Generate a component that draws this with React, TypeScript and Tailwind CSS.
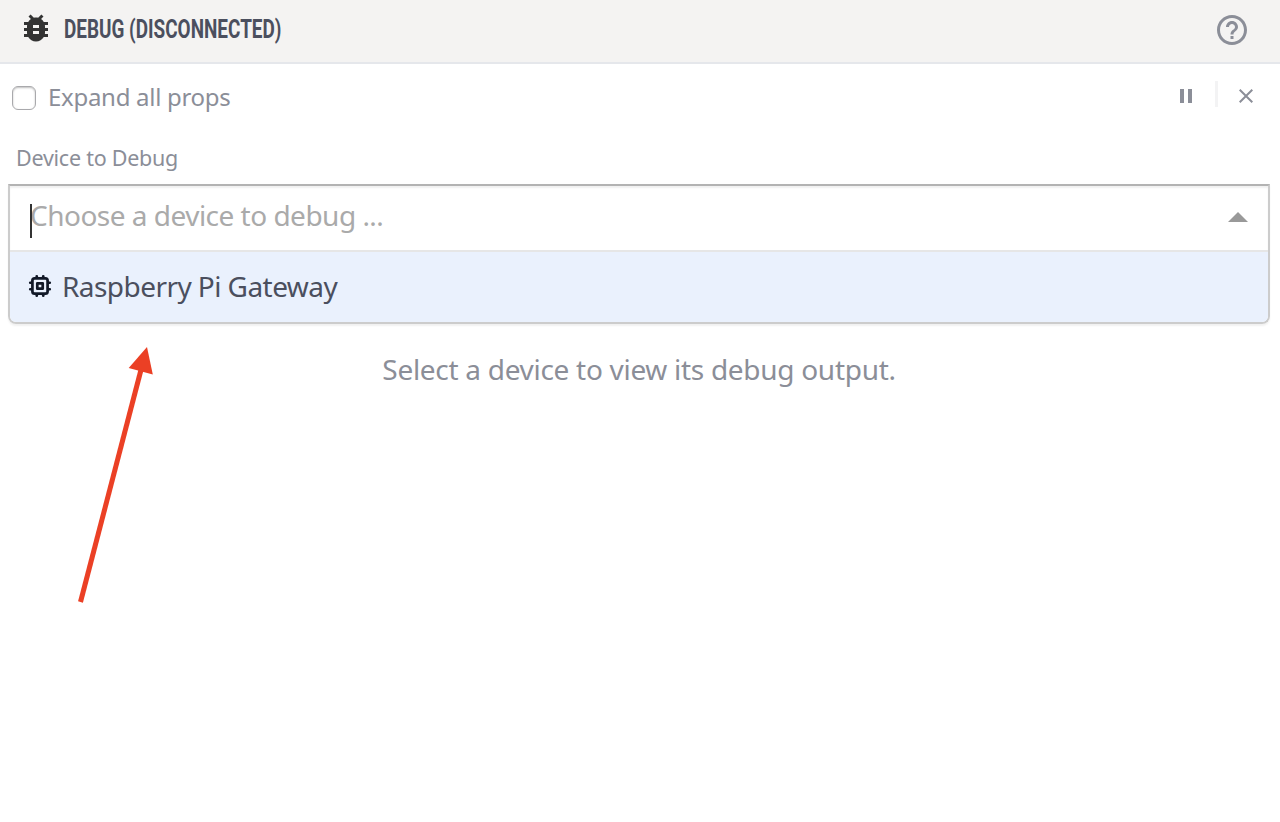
import { MdBugReport, MdHelpOutline } from "react-icons/md";

function ChipIcon() {
  return (
    <svg className="-mt-[2px] size-[26px] shrink-0 text-[#111827]" viewBox="0 0 24 24" fill="none" stroke="currentColor" strokeWidth="2.5" strokeLinecap="round" strokeLinejoin="round">
      <path d="M9 3v2m6-2v2M9 19v2m6-2v2M5 9H3m2 6H3m18-6h-2m2 6h-2M7 19h10a2 2 0 002-2V7a2 2 0 00-2-2H7a2 2 0 00-2 2v10a2 2 0 002 2zM9.5 9.5h5v5h-5z" />
    </svg>
  );
}

function Header() {
  return (
    <header className="flex h-16 items-start border-b-2 border-[#e5e7eb] bg-[#f4f3f2] pl-[18px] pr-[30px]">
      <MdBugReport className="mt-[10px] size-9 shrink-0 text-[#333333]" />
      <h1 className="ml-[10px] mt-[11px] w-[219px] origin-left scale-x-[0.728] whitespace-nowrap font-['Roboto',sans-serif] text-[26px] font-bold leading-9 text-[#4b4f5e]">
        DEBUG (DISCONNECTED)
      </h1>
      <button className="ml-auto mt-3" aria-label="Help">
        <MdHelpOutline className="size-9 text-[#8b8e98]" />
      </button>
    </header>
  );
}

function Toolbar() {
  return (
    <div className="flex h-[69px] items-start pl-3 pr-[27px]">
      <label className="mt-[16px] flex h-9 items-center">
        <span className="size-6 rounded-[6px] border border-[#a9a9ac] bg-white shadow-[inset_0_1px_2px_rgba(0,0,0,0.25)]" />
        <span className="-mt-[2px] ml-3 whitespace-nowrap text-[24px] leading-9 tracking-[-0.29px]">Expand all props</span>
      </label>
      <div className="ml-auto mt-[17px] flex h-[26px] items-center">
        <button className="mt-1 flex gap-1" aria-label="Pause">
          <span className="h-[14px] w-1 bg-[#8b8e98]" />
          <span className="h-[14px] w-1 bg-[#8b8e98]" />
        </button>
        <span className="ml-[23px] h-[26px] w-[3px] bg-[#f3f3f4]" />
        <button className="ml-[21px] mt-1" aria-label="Close">
          <svg className="size-[14px]" viewBox="0 0 14 14" fill="none" stroke="#8b8e98" strokeWidth="2">
            <path d="M.7.7l12.6 12.6M13.3.7L.7 13.3" />
          </svg>
        </button>
      </div>
    </div>
  );
}

function DeviceSelect() {
  return (
    <section>
      <h2 className="ml-4 h-[51px] pt-[8px] text-[21.5px] leading-[34px] tracking-[-0.25px]">Device to Debug</h2>
      <div className="ml-2 mr-[10px] rounded-b-lg border-2 border-[#cccccc] border-t-[#b3b3b3] shadow-[0_2px_2px_rgba(0,0,0,0.06)]">
        <div className="flex h-16 items-center pl-5 pr-5 shadow-[inset_0_2px_2px_rgba(0,0,0,0.06)]">
          <span className="relative -mt-[6px] whitespace-nowrap text-[28px] leading-10 tracking-[-0.51px] text-[#aaaaaa]">
            Choose a device to debug ...
            <span className="absolute left-0 top-[9px] h-[34px] w-[2px] bg-[#333333]" />
          </span>
          <svg className="-mt-[2px] ml-auto h-[10px] w-5" viewBox="0 0 20 10">
            <path d="M0 10L10 0l10 10z" fill="#999999" />
          </svg>
        </div>
        <div className="flex h-[72px] items-center rounded-b-[6px] border-t-2 border-[#e6e6e6] bg-[#eaf1fd] pl-[17px] text-[#4b4f5e]">
          <ChipIcon />
          <span className="-mt-[3px] ml-[9px] whitespace-nowrap text-[28px] leading-10 tracking-[-0.56px]">Raspberry Pi Gateway</span>
        </div>
      </div>
    </section>
  );
}

export default function App() {
  return (
    <main className="relative h-[822px] w-full overflow-hidden bg-white font-['Noto_Sans',sans-serif] font-[450] text-[#8b8e98]">
      <Header />
      <Toolbar />
      <DeviceSelect />
      <p className="mt-[25px] pr-[2px] text-center text-[28px] leading-10 tracking-[-0.29px]">Select a device to view its debug output.</p>
      <svg className="absolute left-[70px] top-[340px] h-[270px] w-[90px]" viewBox="70 340 90 270" aria-hidden="true">
        <path d="M80.5 602L142 366" stroke="#eb4025" strokeWidth="5" />
        <path d="M147 347L152.8 374.5L128.7 368z" fill="#eb4025" />
      </svg>
    </main>
  );
}
